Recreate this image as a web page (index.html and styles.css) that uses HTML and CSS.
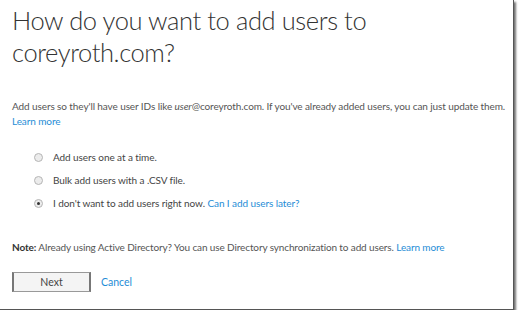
FILE: index.html
```html
<!DOCTYPE html>
<html>
<head>
<meta charset="utf-8">
<link rel="stylesheet" href="styles.css">
</head>
<body>
<div class="frame">
  <h1 class="title">How do you want to add users to coreyroth.com?</h1>
  <p class="intro">Add users so they'll have user IDs like <em>user</em>@coreyroth.com. If you've already added users, you can just update them. <a class="link" href="#">Learn more</a></p>
  <div class="options">
    <label class="option"><span class="radio"></span><span>Add users one at a time.</span></label>
    <label class="option"><span class="radio"></span><span>Bulk add users with a .CSV file.</span></label>
    <label class="option"><span class="radio checked"></span><span>I don't want to add users right now. <a class="link" href="#">Can I add users later?</a></span></label>
  </div>
  <p class="note"><b>Note:</b> Already using Active Directory? You can use Directory synchronization to add users. <a class="link" href="#">Learn more</a></p>
  <div class="actions">
    <button class="btn">Next</button>
    <a class="link" href="#">Cancel</a>
  </div>
</div>
</body>
</html>
```
FILE: styles.css
```css
html, body {
  margin: 0;
  padding: 0;
  background: #ffffff;
}
.frame {
  width: 514px;
  height: 310px;
  box-sizing: border-box;
  background: #fff;
  border-right: 1px solid #555;
  border-bottom: 1px solid #555;
  box-shadow: 2px 2px 2px rgba(0,0,0,0.55);
  padding: 4px 0 0 12px;
  font-family: "Lato", "Open Sans", sans-serif;
  color: #444;
}
.title {
  margin: 0;
  font-family: "Lato", sans-serif;
  font-weight: 300;
  font-size: 25.5px;
  letter-spacing: -0.4px;
  line-height: 32px;
  color: #333;
  width: 380px;
}
.intro {
  margin: 31px 0 0 0;
  font-size: 10px;
  letter-spacing: -0.1px;
  line-height: 15px;
  color: #555;
  width: 498px;
}
.link {
  color: #1f8dd6;
  text-decoration: none;
}
.options {
  display: flex;
  flex-direction: column;
  gap: 7px;
  margin: 20px 0 0 22px;
}
.option {
  display: flex;
  align-items: center;
  gap: 10px;
  font-size: 10px;
  letter-spacing: -0.08px;
  line-height: 16px;
  color: #444;
}
.radio {
  width: 9px;
  height: 9px;
  border-radius: 50%;
  border: 1px solid #b5b5b5;
  background: #ececec;
  box-sizing: border-box;
  position: relative;
}
.radio.checked::after {
  content: "";
  position: absolute;
  left: 2px;
  top: 2px;
  width: 3px;
  height: 3px;
  border-radius: 50%;
  background: #333;
}
.note {
  margin: 29px 0 0 0;
  font-size: 10px;
  letter-spacing: -0.12px;
  line-height: 15px;
  color: #555;
}
.note b {
  font-weight: 700;
  color: #333;
}
.actions {
  display: flex;
  align-items: center;
  gap: 10px;
  margin-top: 17px;
  font-size: 10.5px;
}
.btn {
  width: 79px;
  height: 20px;
  background: #f4f4f4;
  border: 1px solid #999;
  border-left: 2px solid #777;
  border-right: 2px solid #777;
  font-family: "Lato", sans-serif;
  font-size: 10.5px;
  color: #444;
  padding: 0;
}
```
